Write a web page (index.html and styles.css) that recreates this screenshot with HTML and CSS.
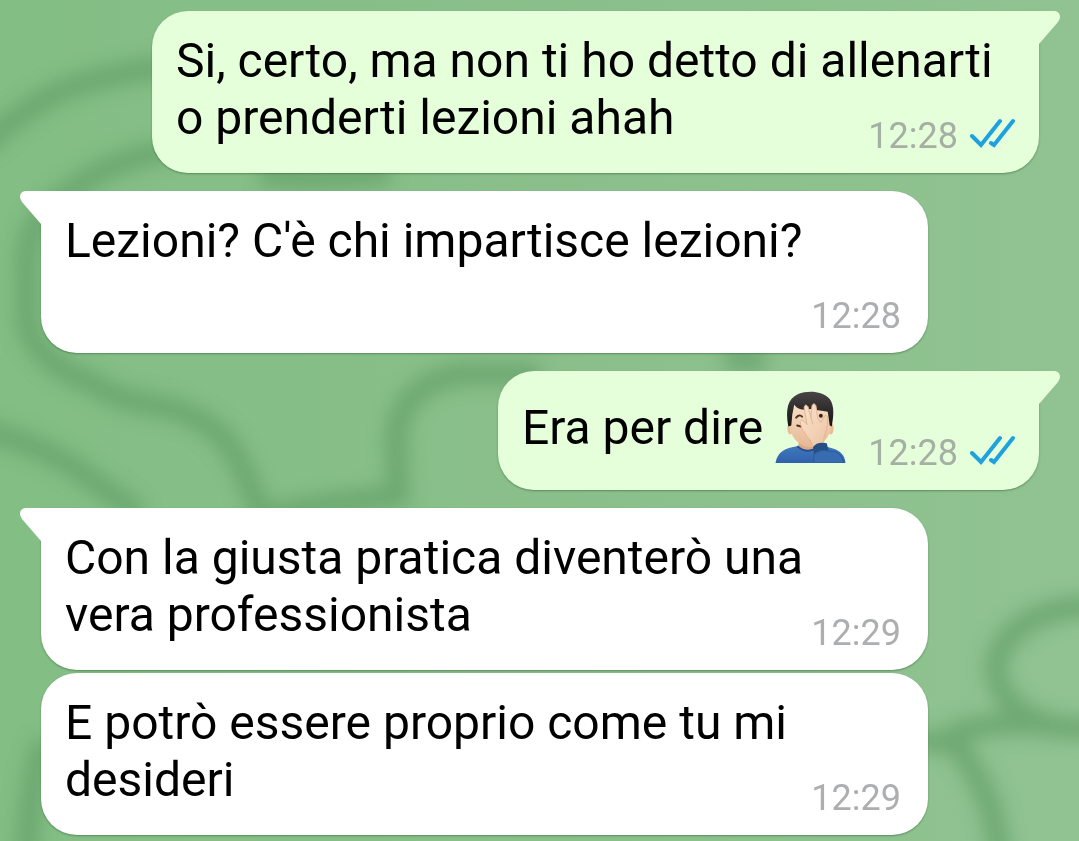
FILE: index.html
```html
<!DOCTYPE html>
<html lang="it">
<head>
    <meta charset="UTF-8">
    <meta name="viewport" content="width=device-width, initial-scale=1.0">
    <title>Chat</title>
    <link rel="stylesheet" href="styles.css">
</head>
<body>

<svg class="wallpaper" viewBox="0 0 1079 841" preserveAspectRatio="xMidYMid slice" aria-hidden="true">
    <defs>
        <filter id="soft" x="-10%" y="-10%" width="120%" height="120%">
            <feGaussianBlur stdDeviation="9"/>
        </filter>
    </defs>
    <g class="wallpaper-lines" filter="url(#soft)">
        <path d="M-20 148 Q5 125 40 102 T170 66"/>
        <path d="M170 150 Q110 160 75 188 Q22 220 27 270 V325 Q40 365 90 382 Q120 402 150 404 Q200 412 225 440 Q245 465 262 520"/>
        <path d="M260 174 Q320 182 390 172"/>
        <path d="M-20 430 Q45 445 85 475 L140 515"/>
        <path d="M540 374 H460 Q398 386 396 440 L398 496 Q340 502 270 514"/>
        <path d="M725 358 L765 362"/>
        <path d="M1100 606 Q1030 606 1003 645 Q985 675 1012 704 Q1040 732 1100 728"/>
        <path d="M910 741 Q950 738 962 752 Q980 780 990 805 L1002 860"/>
        <path d="M950 734 Q1010 716 1060 728"/>
        <path d="M45 740 Q30 780 26 860"/>
    </g>
</svg>

<main class="chat">
    <div class="message out tailed">
        <svg class="tail" viewBox="0 0 22 34" aria-hidden="true"><path d="M0 0 H17 Q22 1 22 6 Q22 8 20 11 L1 33 H0 Z"/></svg>
        <p class="text">Si, certo, ma non ti ho detto di allenarti o prenderti lezioni ahah<span class="spacer"></span></p>
        <div class="meta">
            <time>12:28</time>
            <svg class="checks" viewBox="0 0 45 31" role="img" aria-label="Letto"><path d="M2 18 L11 27 L30 3 M21 25 L24 27 L43 3"/></svg>
        </div>
    </div>

    <div class="message in tailed">
        <svg class="tail" viewBox="0 0 22 34" aria-hidden="true"><path d="M22 0 H5 Q0 1 0 6 Q0 8 2 11 L21 33 H22 Z"/></svg>
        <p class="text">Lezioni? C'è chi impartisce lezioni?<span class="spacer"></span></p>
        <div class="meta">
            <time>12:28</time>
        </div>
    </div>

    <div class="message out tailed">
        <svg class="tail" viewBox="0 0 22 34" aria-hidden="true"><path d="M0 0 H17 Q22 1 22 6 Q22 8 20 11 L1 33 H0 Z"/></svg>
        <p class="text">Era per dire
            <svg class="emoji" viewBox="0 0 72 72" role="img" aria-label="Uomo che si copre il volto">
                <defs>
                    <linearGradient id="skin" x1="0" y1="0" x2="0" y2="1">
                        <stop offset="0" stop-color="#fae0c6"/>
                        <stop offset="1" stop-color="#e6b894"/>
                    </linearGradient>
                    <linearGradient id="hand" x1="0" y1="0" x2="1" y2="1">
                        <stop offset="0" stop-color="#fbe3ce"/>
                        <stop offset="1" stop-color="#ecc4a4"/>
                    </linearGradient>
                    <linearGradient id="hair" x1="0" y1="0" x2="0" y2="1">
                        <stop offset="0" stop-color="#494546"/>
                        <stop offset="1" stop-color="#151314"/>
                    </linearGradient>
                    <linearGradient id="shirt" x1="0" y1="0" x2="0" y2="1">
                        <stop offset="0" stop-color="#4078bd"/>
                        <stop offset="1" stop-color="#3061ab"/>
                    </linearGradient>
                </defs>
                <path fill="url(#shirt)" d="M0 72 C2 60 10 57 22 55 L48 55 C62 57 70 61 71 72 Z"/>
                <path fill="#dca987" d="M24 46 H41 V57 Q32 62 23 57 Z"/>
                <path fill="none" stroke="#24508f" stroke-width="2" d="M22 55 Q31 63 42 57"/>
                <ellipse cx="15" cy="37" rx="3" ry="6" fill="#e9bd99"/>
                <ellipse cx="56" cy="37" rx="3" ry="6" fill="#e9bd99"/>
                <path fill="url(#skin)" d="M15 18 Q35 5 56 18 V38 C54 48 44 56 35 56 C26 56 17 48 15 38 Z"/>
                <path fill="url(#hair)" d="M13 35 C10 18 12 7 23 2 C33 -2 48 -1 55 7 C60 14 59 24 57 35 L55 34 L53 20 C47 19 42 19 38 17 L29 18 C24 18 21 16 19 13 L17 23 L16 34 Z"/>
                <path fill="none" stroke="#4a3324" stroke-width="2" stroke-linecap="round" d="M21 26 Q24 22 27 25 M22 34 L26 35"/>
                <path fill="url(#hand)" stroke="#e2b594" stroke-width="1" d="M38 55 C37 50 33 47 30 42 C27 38 25 33 25 30 Q26 27 29 30 L32 33 L29 16 Q30 11 33 15 L36 26 L37 14 Q39 10 41 14 L43 27 L46 31 L50 24 Q53 23 53 28 C53 35 51 41 49 46 L49 55 Z"/>
                <path fill="none" stroke="#e0b493" stroke-width="1" d="M36 26 L38 33 M34 48 L36 51"/>
                <circle cx="46" cy="24" r="2" fill="#35241c"/>
                <path fill="#245084" d="M38 56 Q42 50 52 52 L54 60 Q45 58 39 63 Z"/>
                <path fill="#386bb0" stroke="#285895" stroke-width="1" d="M39 71 V63 Q46 57 55 60 Q66 59 69 71"/>
            </svg><span class="spacer"></span></p>
        <div class="meta">
            <time>12:28</time>
            <svg class="checks" viewBox="0 0 45 31" role="img" aria-label="Letto"><path d="M2 18 L11 27 L30 3 M21 25 L24 27 L43 3"/></svg>
        </div>
    </div>

    <div class="message in tailed">
        <svg class="tail" viewBox="0 0 22 34" aria-hidden="true"><path d="M22 0 H5 Q0 1 0 6 Q0 8 2 11 L21 33 H22 Z"/></svg>
        <p class="text">Con la giusta pratica diventerò una vera professionista<span class="spacer"></span></p>
        <div class="meta">
            <time>12:29</time>
        </div>
    </div>

    <div class="message in">
        <p class="text">E potrò essere proprio come tu mi desideri<span class="spacer"></span></p>
        <div class="meta">
            <time>12:29</time>
        </div>
    </div>
</main>

</body>
</html>
```
FILE: styles.css
```css
* {
    box-sizing: border-box;
}

body {
    margin: 0;
    min-height: 100vh;
    background: linear-gradient(90deg, #83be85, #8bbf8b 60%, #90c391);
    font-family: Roboto, "Noto Sans", sans-serif;
    color: #000;
}

/* Blurred pattern behind the messages */
.wallpaper {
    position: fixed;
    inset: 0;
    width: 100%;
    height: 100%;
}

.wallpaper-lines {
    fill: none;
    stroke: #65a069;
    stroke-width: 22;
    opacity: 0.75;
}

.chat {
    position: relative;
    display: flex;
    flex-direction: column;
    padding: 11px 40px 6px 41px;
}

.message {
    position: relative;
    display: grid;
    max-width: calc(100% - 111px);
    margin-top: 3px;
    padding: 21px 24px 19px;
    border-radius: 36px;
    box-shadow: 0 1px 2px rgba(0, 50, 0, 0.35);
}

.message.tailed {
    margin-top: 18px;
}

.message.tailed:first-child {
    margin-top: 0;
}

.in {
    align-self: flex-start;
    background-color: #fff;
}

.out {
    align-self: flex-end;
    background-color: #e6ffdb;
}

.in.tailed {
    border-top-left-radius: 0;
}

.out.tailed {
    border-top-right-radius: 0;
}

.tail {
    position: absolute;
    top: 0;
    width: 22px;
    height: 34px;
}

.in .tail {
    right: 100%;
    margin-right: -1px;
    fill: #fff;
}

.out .tail {
    left: 100%;
    margin-left: -1px;
    fill: #e6ffdb;
}

/* Text and time share one cell, the spacer keeps the last line clear of the time */
.text,
.meta {
    grid-area: 1 / 1;
}

.text {
    margin: 0;
    padding-bottom: 8px;
    font-size: 48px;
    line-height: 57px;
}

.spacer {
    display: inline-block;
    width: 112px;
    height: 1px;
}

.out .spacer {
    width: 168px;
}

.emoji {
    width: 72px;
    height: 71px;
    vertical-align: -19px;
    overflow: visible;
}

.meta {
    display: flex;
    align-items: flex-start;
    align-self: end;
    justify-self: end;
    gap: 12px;
    font-size: 36px;
    line-height: 36px;
    color: #acaeb0;
}

.in .meta {
    padding-right: 3px;
}

.out .meta {
    color: #a5afa3;
}

.checks {
    width: 45px;
    height: 31px;
    fill: none;
    stroke: #1da2df;
    stroke-width: 4;
    stroke-linecap: round;
}
```
